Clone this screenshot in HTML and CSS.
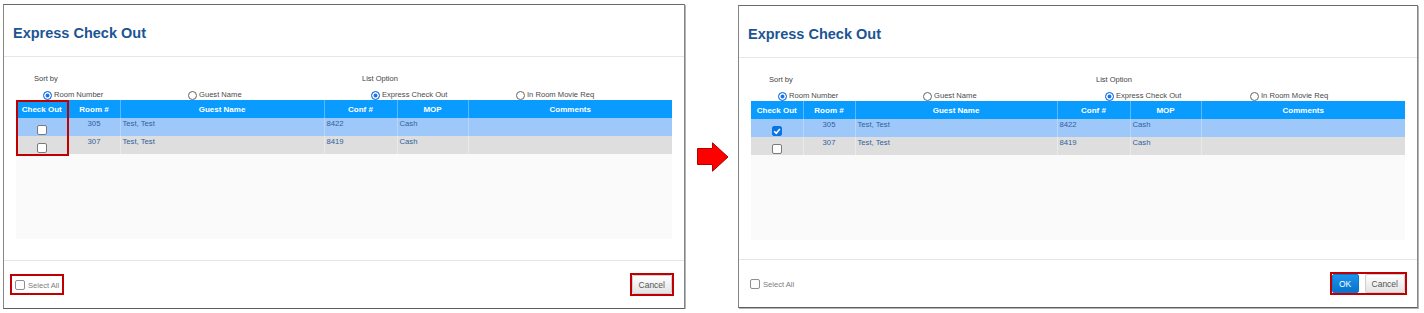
FILE: index.html
```html
<!DOCTYPE html>
<html lang="en">
<head>
    <meta charset="UTF-8">
    <meta name="viewport" content="width=device-width, initial-scale=1.0">
    <title>Express Check Out</title>
    <link rel="stylesheet" href="styles.css">
</head>
<body>
    <div class="steps">
        <!-- before: nothing ticked, only Cancel -->
        <section class="dialog dialog-before">
            <header class="dialog-header">
                <h2>Express Check Out</h2>
            </header>
            <div class="dialog-body">
                <div class="options">
                    <div class="option-group">
                        <div class="option-label">Sort by</div>
                        <div class="option-radios">
                            <label class="radio"><span class="dot on"></span>Room Number</label>
                            <label class="radio"><span class="dot"></span>Guest Name</label>
                        </div>
                    </div>
                    <div class="option-group">
                        <div class="option-label">List Option</div>
                        <div class="option-radios">
                            <label class="radio"><span class="dot on"></span>Express Check Out</label>
                            <label class="radio"><span class="dot"></span>In Room Movie Req</label>
                        </div>
                    </div>
                </div>
                <div class="grid-wrap">
                    <table class="grid">
                        <colgroup>
                            <col class="c-check"><col class="c-room"><col><col class="c-conf"><col class="c-mop"><col class="c-comments">
                        </colgroup>
                        <thead>
                            <tr><th>Check Out</th><th>Room #</th><th>Guest Name</th><th>Conf #</th><th>MOP</th><th>Comments</th></tr>
                        </thead>
                        <tbody>
                            <tr class="row-sel">
                                <td class="check"><span class="cb"></span></td>
                                <td class="center">305</td><td>Test, Test</td><td>8422</td><td>Cash</td><td></td>
                            </tr>
                            <tr>
                                <td class="check"><span class="cb"></span></td>
                                <td class="center">307</td><td>Test, Test</td><td>8419</td><td>Cash</td><td></td>
                            </tr>
                        </tbody>
                    </table>
                    <div class="mark-col"></div>
                </div>
            </div>
            <footer class="dialog-footer">
                <label class="select-all marked"><span class="cb"></span>Select All</label>
                <div class="actions marked">
                    <button type="button" class="btn">Cancel</button>
                </div>
            </footer>
        </section>

        <div class="arrow">
            <svg width="32" height="30" viewBox="0 0 32 30">
                <polygon points="0.5,6.5 15.5,6.5 15.5,0.8 31,15 15.5,29.2 15.5,22.5 0.5,22.5" fill="#ff0000" stroke="#b30000" stroke-width="1"/>
            </svg>
        </div>

        <!-- after: room 305 ticked, OK shows up -->
        <section class="dialog dialog-after">
            <header class="dialog-header">
                <h2>Express Check Out</h2>
            </header>
            <div class="dialog-body">
                <div class="options">
                    <div class="option-group">
                        <div class="option-label">Sort by</div>
                        <div class="option-radios">
                            <label class="radio"><span class="dot on"></span>Room Number</label>
                            <label class="radio"><span class="dot"></span>Guest Name</label>
                        </div>
                    </div>
                    <div class="option-group">
                        <div class="option-label">List Option</div>
                        <div class="option-radios">
                            <label class="radio"><span class="dot on"></span>Express Check Out</label>
                            <label class="radio"><span class="dot"></span>In Room Movie Req</label>
                        </div>
                    </div>
                </div>
                <div class="grid-wrap">
                    <table class="grid">
                        <colgroup>
                            <col class="c-check"><col class="c-room"><col><col class="c-conf"><col class="c-mop"><col class="c-comments">
                        </colgroup>
                        <thead>
                            <tr><th>Check Out</th><th>Room #</th><th>Guest Name</th><th>Conf #</th><th>MOP</th><th>Comments</th></tr>
                        </thead>
                        <tbody>
                            <tr class="row-sel">
                                <td class="check">
                                    <span class="cb on"><svg width="10" height="10" viewBox="0 0 10 10"><path d="M2.2 5.2 L4.2 7.2 L7.9 2.9" fill="none" stroke="#fff" stroke-width="1.6"/></svg></span>
                                </td>
                                <td class="center">305</td><td>Test, Test</td><td>8422</td><td>Cash</td><td></td>
                            </tr>
                            <tr>
                                <td class="check"><span class="cb"></span></td>
                                <td class="center">307</td><td>Test, Test</td><td>8419</td><td>Cash</td><td></td>
                            </tr>
                        </tbody>
                    </table>
                </div>
            </div>
            <footer class="dialog-footer">
                <label class="select-all"><span class="cb"></span>Select All</label>
                <div class="actions marked">
                    <button type="button" class="btn btn-ok">OK</button>
                    <button type="button" class="btn">Cancel</button>
                </div>
            </footer>
        </section>
    </div>
</body>
</html>
```

FILE: styles.css
```css
body {
    margin: 0;
    padding: 0;
    font-family: 'Liberation Sans', Arial, sans-serif;
    background-color: #fff;
    color: #555;
}
.steps {
    display: flex;
    align-items: center;
    padding: 4px 0 0 3px;
}
.dialog {
    box-sizing: border-box;
    display: flex;
    flex-direction: column;
    height: 305px;
    border: 1px solid #858585;
    border-top-color: #6a6a6a;
    border-bottom-color: #5e5e5e;
    background: #fff;
    box-shadow: 1px 1px 0 #b5b5b5;
}
.dialog-before {
    width: 682px;
}
.dialog-after {
    width: 680px;
    height: 303px;
}
.dialog-header {
    height: 51px;
    display: flex;
    align-items: center;
    padding: 0 9px;
    border-bottom: 1px solid #e6e6e6;
}
.dialog-header h2 {
    margin: 4px 0 0 0;
    font-size: 14.5px;
    font-weight: 700;
    color: #1b5593;
}
.dialog-body {
    flex: 1;
    padding: 17px 12px 0 12px;
}
.options {
    display: grid;
    grid-template-columns: 1fr 1fr;
}
.option-label {
    padding-left: 18px;
    font-size: 7.5px;
    line-height: 10px;
    color: #444;
}
.option-radios {
    display: grid;
    grid-template-columns: 145px auto;
    padding-left: 27px;
    margin-top: 6px;
    height: 10px;
}
.radio {
    display: flex;
    align-items: center;
    gap: 2px;
    font-size: 7.6px;
    line-height: 10px;
    color: #4a4a4a;
}
.dot {
    box-sizing: border-box;
    width: 9px;
    height: 9px;
    border: 1px solid #666;
    border-radius: 50%;
    background: #fff;
}
.dot.on {
    border-color: #1a73e8;
    background: #1a73e8;
    box-shadow: inset 0 0 0 1.5px #fff;
}
.grid-wrap {
    position: relative;
    height: 139px;
    background-color: #fafafa;
}
.grid {
    width: 100%;
    table-layout: fixed;
    border-collapse: collapse;
    font-size: 7.7px;
}
.c-check { width: 52px; }
.c-room { width: 52px; }
.c-conf { width: 73px; }
.c-mop { width: 71px; }
.c-comments { width: 204px; }
.grid th {
    height: 18px;
    padding: 0;
    background-color: #0a9bff;
    color: #fff;
    font-size: 8px;
    font-weight: 700;
    text-align: center;
    border-right: 1px solid #5ab9ff;
}
.grid td {
    height: 18px;
    padding: 1px 2px 0 2px;
    box-sizing: border-box;
    vertical-align: top;
    line-height: 10px;
    color: #2f619e;
    background-color: #dedede;
    border-right: 1px solid #e9e9e9;
}
.grid th:last-child,
.grid td:last-child {
    border-right: none;
}
.grid .row-sel td {
    background-color: #9fc8fa;
    border-right-color: #b7d6fb;
}
.grid td.center {
    text-align: center;
}
.grid td.check {
    padding: 0;
    text-align: center;
}
.grid td.check .cb {
    display: block;
    margin: 7px auto 0 auto;
}
.cb {
    box-sizing: border-box;
    display: inline-block;
    width: 10px;
    height: 10px;
    border: 1px solid #7a7a7a;
    border-radius: 2px;
    background: #fff;
}
.cb.on {
    border-color: #0b74e5;
    background: #0b74e5;
}
.cb.on svg {
    display: block;
    margin: -1px 0 0 -1px;
}
.mark-col {
    position: absolute;
    left: 0;
    top: 0;
    width: 53px;
    height: 56px;
    box-sizing: border-box;
    border: 2px solid #c00000;
}
.dialog-footer {
    height: 47px;
    display: flex;
    align-items: center;
    justify-content: space-between;
    padding: 0 10px 0 6px;
    border-top: 1px solid #e6e6e6;
}
.select-all {
    box-sizing: border-box;
    display: flex;
    align-items: center;
    gap: 3px;
    height: 21px;
    padding: 1px 3px 0 3px;
    border: 2px solid transparent;
    font-size: 7.6px;
    color: #7d7d7d;
}
.select-all .cb {
    border-color: #8f8f8f;
}
.actions {
    display: flex;
    gap: 6px;
    border: 2px solid transparent;
}
.marked {
    border-color: #c00000;
}
.btn {
    height: 19px;
    padding: 0 6px;
    border: 1px solid #cfcfcf;
    border-radius: 2px;
    background: linear-gradient(#ffffff, #e4e4e4);
    font-family: 'Liberation Sans', Arial, sans-serif;
    font-size: 8.5px;
    color: #555;
}
.btn-ok {
    width: 27px;
    border-color: #0a78d2;
    background: linear-gradient(#1c93ec, #0773cc);
    color: #fff;
}
.arrow {
    display: flex;
    justify-content: center;
    width: 53px;
}
.arrow svg {
    display: block;
    margin-left: 2px;
}
```
